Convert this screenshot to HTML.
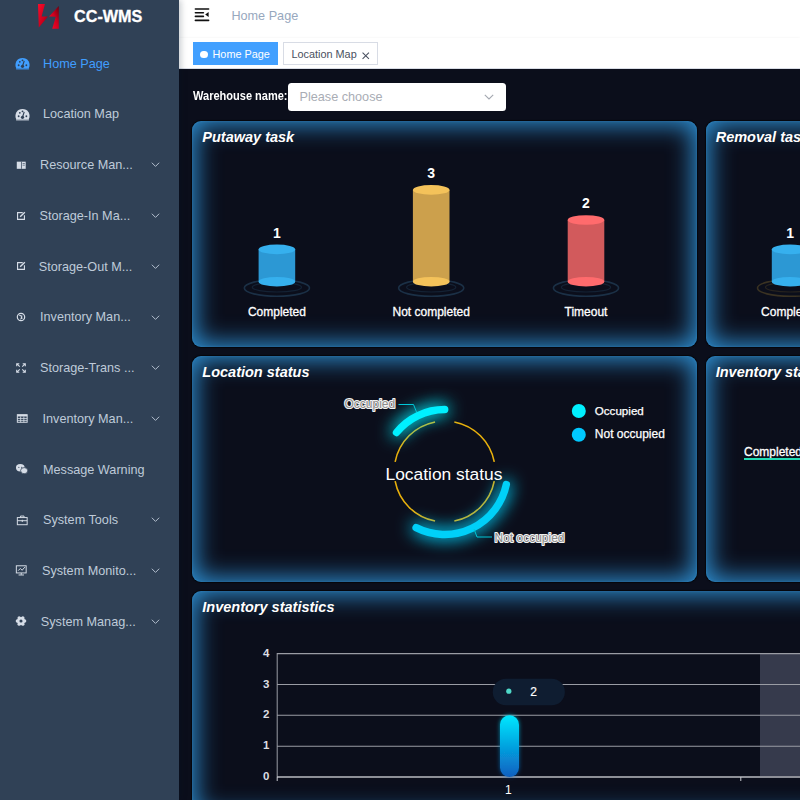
<!DOCTYPE html>
<html><head><meta charset="utf-8">
<style>
*{margin:0;padding:0;box-sizing:border-box}
html,body{width:800px;height:800px;overflow:hidden;background:#0b0e1b;font-family:"Liberation Sans",sans-serif}
.abs{position:absolute}
#side{position:absolute;left:0;top:0;width:179px;height:800px;background:#304156;z-index:5;box-shadow:2px 0 6px rgba(0,21,41,.22)}
.mi{position:absolute;left:0;width:179px;height:20px;color:#bfcbd9;font-size:12.67px;line-height:20px;white-space:nowrap}
.mi .t{position:absolute;top:0}
.mi .ic{position:absolute;left:15.5px;top:4.2px;width:12px;height:12px}
.mi .ic svg{display:block}
.mi .chev{position:absolute;left:150.8px;top:7.2px;width:9px;height:5.5px}
#hdr{position:absolute;left:179px;top:0;width:621px;height:38px;background:#fff;box-shadow:0 1px 3px rgba(0,21,41,.08)}
#tags{position:absolute;left:179px;top:38px;width:621px;height:31px;background:#fff;border-bottom:1px solid #d8dce5;box-shadow:0 1px 3px 0 rgba(0,0,0,.12)}
#main{position:absolute;left:179px;top:69px;width:621px;height:731px;background:#0b0e1b}
.card{position:absolute;border-radius:9px;background:#0b0e1b;box-shadow:inset 0 0 3px 0 rgba(70,170,235,.35),inset 0 0 25px 4px rgba(46,143,210,1),0 0 1px 1px rgba(0,0,0,.6)}
.ct{position:absolute;left:10px;top:8px;color:#fff;font-weight:bold;font-style:italic;font-size:14.5px;white-space:nowrap}
.lbl{position:absolute;color:#fff;font-size:12px;white-space:nowrap;transform:translateX(-50%);-webkit-text-stroke:.3px #fff}
.num{position:absolute;color:#fff;font-size:14px;font-weight:bold;transform:translateX(-50%)}
.olbl{color:#fff;font-size:12px;line-height:14px;white-space:nowrap;text-shadow:-1px -1px 0 #555,1px -1px 0 #555,-1px 1px 0 #555,1px 1px 0 #555}
</style></head><body>
<div id="side">
  <!-- logo -->
  <svg class="abs" style="left:0;top:0" width="179" height="34">
    <defs>
      <linearGradient id="lg1" x1="0" y1="0" x2="1" y2="1"><stop offset="0" stop-color="#ff0a2a"/><stop offset=".6" stop-color="#c8001c"/><stop offset="1" stop-color="#7a0010"/></linearGradient>
      <linearGradient id="lg2" x1="1" y1="0" x2="0" y2="1"><stop offset="0" stop-color="#6a0010"/><stop offset=".45" stop-color="#d0001e"/><stop offset="1" stop-color="#ff0a2a"/></linearGradient>
    </defs>
    <polygon points="38,4 45,4 41.6,16.4 48,16.6 38.8,27.6" fill="url(#lg1)"/>
    <polygon points="58.8,6 58.8,28.8 52.2,28.8 55.8,16.8 49,16.4" fill="url(#lg2)"/>
  </svg>
  <div class="abs" style="left:74px;top:5.6px;font-size:16.2px;font-weight:bold;color:#fff;line-height:20px;-webkit-text-stroke:.3px #fff">CC-WMS</div>
  <div class="mi" style="top:53.70px;color:#409eff"><span class="ic" style="left:14.95px;top:2.20px;width:15px;height:15px"><svg width="15" height="15" viewBox="0 0 14 14"><path d="M1.2,11.5 A6.6,6.6 0 1 1 12.8,11.5 Z" fill="#409eff"/><circle cx="7" cy="9.6" r="1.5" fill="#304156"/><path d="M7,9.6 L8.6,4.6" stroke="#304156" stroke-width="1.1"/><circle cx="3.4" cy="8.6" r=".85" fill="#304156"/><circle cx="4.5" cy="5.4" r=".85" fill="#304156"/><circle cx="7" cy="4" r=".85" fill="#304156"/><circle cx="10.6" cy="8.6" r=".85" fill="#304156"/><rect x="1" y="11.5" width="12" height="1" fill="#409eff"/></svg></span><span class="t" style="left:43px">Home Page</span></div>
<div class="mi" style="top:104.43px;color:#bfcbd9"><span class="ic" style="left:14.95px;top:2.20px;width:15px;height:15px"><svg width="15" height="15" viewBox="0 0 14 14"><path d="M1.2,11.5 A6.6,6.6 0 1 1 12.8,11.5 Z" fill="#d6dde7"/><circle cx="7" cy="9.6" r="1.5" fill="#304156"/><path d="M7,9.6 L8.6,4.6" stroke="#304156" stroke-width="1.1"/><circle cx="3.4" cy="8.6" r=".85" fill="#304156"/><circle cx="4.5" cy="5.4" r=".85" fill="#304156"/><circle cx="7" cy="4" r=".85" fill="#304156"/><circle cx="10.6" cy="8.6" r=".85" fill="#304156"/><rect x="1" y="11.5" width="12" height="1" fill="#d6dde7"/></svg></span><span class="t" style="left:43px">Location Map</span></div>
<div class="mi" style="top:155.16px;color:#bfcbd9"><span class="ic" style="left:14.75px;top:3.45px;width:12.5px;height:12.5px"><svg width="12.5" height="12.5" viewBox="0 0 14 14"><rect x="2" y="3" width="10" height="8" fill="#d6dde7"/><rect x="6.7" y="3" width="0.8" height="8" fill="#304156"/><rect x="8.5" y="4.5" width="2.5" height="0.7" fill="#304156"/><rect x="8.5" y="6.5" width="2.5" height="0.7" fill="#304156"/></svg></span><span class="t" style="left:40px">Resource Man...</span><svg class="chev" viewBox="0 0 9 6"><path d="M0.5,0.8 L4.5,4.8 L8.5,0.8" fill="none" stroke="#bfcbd9" stroke-width="1"/></svg></div>
<div class="mi" style="top:205.89px;color:#bfcbd9"><span class="ic" style="left:14.80px;top:3.70px;width:12px;height:12px"><svg width="12" height="12" viewBox="0 0 14 14"><path d="M9,3 H3 V11 H11 V6" fill="none" stroke="#d6dde7" stroke-width="1.3"/><path d="M6,8 L11.5,2.5" stroke="#d6dde7" stroke-width="1.6"/></svg></span><span class="t" style="left:39.5px">Storage-In Ma...</span><svg class="chev" viewBox="0 0 9 6"><path d="M0.5,0.8 L4.5,4.8 L8.5,0.8" fill="none" stroke="#bfcbd9" stroke-width="1"/></svg></div>
<div class="mi" style="top:256.62px;color:#bfcbd9"><span class="ic" style="left:14.80px;top:3.70px;width:12px;height:12px"><svg width="12" height="12" viewBox="0 0 14 14"><path d="M9,3 H3 V11 H11 V6" fill="none" stroke="#d6dde7" stroke-width="1.3"/><path d="M6,8 L11.5,2.5" stroke="#d6dde7" stroke-width="1.6"/></svg></span><span class="t" style="left:38.8px">Storage-Out M...</span><svg class="chev" viewBox="0 0 9 6"><path d="M0.5,0.8 L4.5,4.8 L8.5,0.8" fill="none" stroke="#bfcbd9" stroke-width="1"/></svg></div>
<div class="mi" style="top:307.35px;color:#bfcbd9"><span class="ic" style="left:14.90px;top:3.70px;width:12px;height:12px"><svg width="12" height="12" viewBox="0 0 14 14"><circle cx="7" cy="7" r="4.3" fill="none" stroke="#d6dde7" stroke-width="1.4"/><path d="M5,5 L8,6 L7,9 L9,8" stroke="#d6dde7" stroke-width="1.2" fill="none"/></svg></span><span class="t" style="left:40px">Inventory Man...</span><svg class="chev" viewBox="0 0 9 6"><path d="M0.5,0.8 L4.5,4.8 L8.5,0.8" fill="none" stroke="#bfcbd9" stroke-width="1"/></svg></div>
<div class="mi" style="top:358.08px;color:#bfcbd9"><span class="ic" style="left:15.00px;top:3.70px;width:12px;height:12px"><svg width="12" height="12" viewBox="0 0 14 14"><path d="M2,5 V2 H5 M9,2 H12 V5 M12,9 V12 H9 M5,12 H2 V9 M2,2 L5.5,5.5 M12,2 L8.5,5.5 M12,12 L8.5,8.5 M2,12 L5.5,8.5" fill="none" stroke="#d6dde7" stroke-width="1.3"/></svg></span><span class="t" style="left:40px">Storage-Trans ...</span><svg class="chev" viewBox="0 0 9 6"><path d="M0.5,0.8 L4.5,4.8 L8.5,0.8" fill="none" stroke="#bfcbd9" stroke-width="1"/></svg></div>
<div class="mi" style="top:408.81px;color:#bfcbd9"><span class="ic" style="left:15.50px;top:3.45px;width:12.5px;height:12.5px"><svg width="12.5" height="12.5" viewBox="0 0 14 14"><rect x="1.5" y="3" width="11" height="8.5" fill="none" stroke="#d6dde7" stroke-width="1.1"/><rect x="1.5" y="3" width="11" height="2" fill="#d6dde7"/><path d="M1.5,7.2 H12.5 M1.5,9.4 H12.5 M5.2,5 V11.5 M8.8,5 V11.5" stroke="#d6dde7" stroke-width=".9"/></svg></span><span class="t" style="left:42.5px">Inventory Man...</span><svg class="chev" viewBox="0 0 9 6"><path d="M0.5,0.8 L4.5,4.8 L8.5,0.8" fill="none" stroke="#bfcbd9" stroke-width="1"/></svg></div>
<div class="mi" style="top:459.54px;color:#bfcbd9"><span class="ic" style="left:15.35px;top:2.95px;width:13.5px;height:13.5px"><svg width="13.5" height="13.5" viewBox="0 0 14 14"><ellipse cx="5.5" cy="6" rx="4.5" ry="3.8" fill="#d6dde7"/><ellipse cx="9.5" cy="9" rx="3.7" ry="3.2" fill="#d6dde7" stroke="#304156" stroke-width=".8"/><circle cx="4" cy="5.5" r=".6" fill="#304156"/><circle cx="7" cy="5.5" r=".6" fill="#304156"/></svg></span><span class="t" style="left:43px">Message Warning</span></div>
<div class="mi" style="top:510.27px;color:#bfcbd9"><span class="ic" style="left:15.50px;top:3.45px;width:12.5px;height:12.5px"><svg width="12.5" height="12.5" viewBox="0 0 14 14"><rect x="1.5" y="4" width="11" height="8" fill="none" stroke="#d6dde7" stroke-width="1.1"/><path d="M5,4 V2.3 H9 V4 M1.5,7.5 H12.5 M7,6.5 V9" fill="none" stroke="#d6dde7" stroke-width="1.1"/></svg></span><span class="t" style="left:43px">System Tools</span><svg class="chev" viewBox="0 0 9 6"><path d="M0.5,0.8 L4.5,4.8 L8.5,0.8" fill="none" stroke="#bfcbd9" stroke-width="1"/></svg></div>
<div class="mi" style="top:561.00px;color:#bfcbd9"><span class="ic" style="left:15.00px;top:3.45px;width:12.5px;height:12.5px"><svg width="12.5" height="12.5" viewBox="0 0 14 14"><rect x="1.5" y="2" width="11" height="8" fill="none" stroke="#d6dde7" stroke-width="1.1"/><path d="M3.5,7.5 L6,5 L8,7 L11,3.5 M7,10 V12 M4,12.3 H10" fill="none" stroke="#d6dde7" stroke-width="1.1"/></svg></span><span class="t" style="left:42px">System Monito...</span><svg class="chev" viewBox="0 0 9 6"><path d="M0.5,0.8 L4.5,4.8 L8.5,0.8" fill="none" stroke="#bfcbd9" stroke-width="1"/></svg></div>
<div class="mi" style="top:611.73px;color:#bfcbd9"><span class="ic" style="left:15.00px;top:3.70px;width:12px;height:12px"><svg width="12" height="12" viewBox="0 0 14 14"><circle cx="7" cy="7" r="4.6" fill="#d6dde7"/><circle cx="11.30" cy="7.00" r="1.9" fill="#d6dde7"/><circle cx="9.15" cy="10.72" r="1.9" fill="#d6dde7"/><circle cx="4.85" cy="10.72" r="1.9" fill="#d6dde7"/><circle cx="2.70" cy="7.00" r="1.9" fill="#d6dde7"/><circle cx="4.85" cy="3.28" r="1.9" fill="#d6dde7"/><circle cx="9.15" cy="3.28" r="1.9" fill="#d6dde7"/><circle cx="7" cy="7" r="1.8" fill="#304156"/></svg></span><span class="t" style="left:40.8px">System Manag...</span><svg class="chev" viewBox="0 0 9 6"><path d="M0.5,0.8 L4.5,4.8 L8.5,0.8" fill="none" stroke="#bfcbd9" stroke-width="1"/></svg></div>
</div>
<div id="hdr">
  <svg class="abs" style="left:14.5px;top:7px" width="17" height="16" viewBox="0 0 17 16">
    <path d="M1.4,1.94 H14.6 M1.4,5.7 H9.4 M1.4,9.4 H9.4 M1.4,13.4 H14.6" stroke="#111" stroke-width="1.6" stroke-linecap="round"/>
    <polygon points="11.2,7.6 14.6,5.1 14.6,10" fill="#111"/>
  </svg>
  <div class="abs" style="left:52.4px;top:9px;font-size:12.67px;color:#97a8be;line-height:15px">Home Page</div>
</div>
<div id="tags">
  <div class="abs" style="left:13.5px;top:4px;width:85px;height:23px;background:#42a0ff;color:#fff;font-size:10.86px;line-height:23px">
    <span class="abs" style="left:7.8px;top:8.9px;width:7.4px;height:7.4px;border-radius:50%;background:#fff"></span>
    <span class="abs" style="left:20px;top:1.2px">Home Page</span>
  </div>
  <div class="abs" style="left:103.5px;top:4px;width:95px;height:23px;background:#fff;border:1px solid #d8dce5;color:#495060;font-size:10.86px;line-height:21px">
    <span class="abs" style="left:8px;top:1px">Location Map</span>
    <svg class="abs" style="left:78.5px;top:9.2px" width="7.5" height="7.5" viewBox="0 0 8 8"><path d="M0.6,0.6 L7.4,7.4 M7.4,0.6 L0.6,7.4" stroke="#495060" stroke-width="1.1"/></svg>
  </div>
</div>
<div id="main"></div>
<div class="abs" style="left:192.8px;top:89.2px;color:#fff;font-weight:bold;font-size:12.67px;line-height:14px;white-space:nowrap;transform:scaleX(0.871);transform-origin:0 0">Warehouse name:</div>
<div class="abs" style="left:288.3px;top:82.6px;width:217.4px;height:28.8px;background:#fff;border-radius:3.5px"></div>
<div class="abs" style="left:299.5px;top:90px;color:#a9adb5;font-size:12.67px;line-height:15px;white-space:nowrap">Please choose</div>
<svg class="abs" style="left:484px;top:94px" width="10" height="6" viewBox="0 0 10 6"><path d="M0.8,0.8 L5,5 L9.2,0.8" fill="none" stroke="#a4a8b0" stroke-width="1.1"/></svg>
<div class="card" style="left:192.3px;top:120.6px;width:504.7px;height:226.4px"><div class="ct">Putaway task</div></div>
<div class="card" style="left:705.7px;top:120.6px;width:504.7px;height:226.4px"><div class="ct">Removal task</div></div>
<div class="card" style="left:192.3px;top:356px;width:504.7px;height:226.4px"><div class="ct">Location status</div></div>
<div class="card" style="left:705.7px;top:356px;width:504.7px;height:226.4px"><div class="ct">Inventory status</div></div>
<div class="card" style="left:192.3px;top:591px;width:1018px;height:226.4px"><div class="ct">Inventory statistics</div></div>
<svg class="abs" style="left:0;top:0" width="800" height="800">
<ellipse cx="276.9" cy="288.0" rx="32.6" ry="8.3" fill="none" stroke="#1b3046" stroke-width="1.6"/>
<ellipse cx="276.9" cy="287.2" rx="24.6" ry="4.8" fill="none" stroke="#1b3046" stroke-width="1.2" opacity=".6"/>
<rect x="258.59999999999997" y="249.4" width="36.6" height="32.29999999999998" fill="#2c98d4"/>
<ellipse cx="276.9" cy="281.7" rx="18.3" ry="4.8" fill="#36b0ee"/>
<ellipse cx="276.9" cy="249.4" rx="18.3" ry="4.8" fill="#36b0ee"/>
<ellipse cx="431.2" cy="288.0" rx="32.6" ry="8.3" fill="none" stroke="#1b3046" stroke-width="1.6"/>
<ellipse cx="431.2" cy="287.2" rx="24.6" ry="4.8" fill="none" stroke="#1b3046" stroke-width="1.2" opacity=".6"/>
<rect x="412.9" y="189.9" width="36.6" height="91.79999999999998" fill="#cca04c"/>
<ellipse cx="431.2" cy="281.7" rx="18.3" ry="4.8" fill="#f4c25a"/>
<ellipse cx="431.2" cy="189.9" rx="18.3" ry="4.8" fill="#f4c25a"/>
<ellipse cx="586" cy="288.0" rx="32.6" ry="8.3" fill="none" stroke="#1b3046" stroke-width="1.6"/>
<ellipse cx="586" cy="287.2" rx="24.6" ry="4.8" fill="none" stroke="#1b3046" stroke-width="1.2" opacity=".6"/>
<rect x="567.7" y="220" width="36.6" height="61.69999999999999" fill="#d25a5c"/>
<ellipse cx="586" cy="281.7" rx="18.3" ry="4.8" fill="#ff6b6d"/>
<ellipse cx="586" cy="220" rx="18.3" ry="4.8" fill="#ff6b6d"/>
<ellipse cx="790.1" cy="288.0" rx="32.6" ry="8.3" fill="none" stroke="#3a3222" stroke-width="1.6"/>
<ellipse cx="790.1" cy="287.2" rx="24.6" ry="4.8" fill="none" stroke="#3a3222" stroke-width="1.2" opacity=".6"/>
<rect x="771.8000000000001" y="249.4" width="36.6" height="32.29999999999998" fill="#2c98d4"/>
<ellipse cx="790.1" cy="281.7" rx="18.3" ry="4.8" fill="#36b0ee"/>
<ellipse cx="790.1" cy="249.4" rx="18.3" ry="4.8" fill="#36b0ee"/>
</svg>
<div class="num" style="left:276.9px;top:226.3px;line-height:14px">1</div>
<div class="num" style="left:431.2px;top:166.3px;line-height:14px">3</div>
<div class="num" style="left:586px;top:196.3px;line-height:14px">2</div>
<div class="num" style="left:790.1px;top:226.3px;line-height:14px">1</div>
<div class="lbl" style="left:276.9px;top:304.8px;line-height:14px">Completed</div>
<div class="lbl" style="left:431.2px;top:304.8px;line-height:14px">Not completed</div>
<div class="lbl" style="left:586px;top:304.8px;line-height:14px">Timeout</div>
<div class="lbl" style="left:790.1px;top:304.8px;line-height:14px">Completed</div>
<svg class="abs" style="left:0;top:0" width="800" height="800">
<defs><filter id="glow" filterUnits="userSpaceOnUse" x="300" y="350" width="300" height="250"><feGaussianBlur stdDeviation="8.5" result="b"/><feComponentTransfer in="b" result="b2"><feFuncA type="linear" slope="1.6"/></feComponentTransfer><feMerge><feMergeNode in="b2"/><feMergeNode in="SourceGraphic"/></feMerge></filter></defs>
<path d="M494.27,461.86 A50.5,50.5 0 0 0 454.34,421.93" fill="none" stroke="#e8b00c" stroke-width="1.6"/>
<path d="M435.06,421.93 A50.5,50.5 0 0 0 395.13,461.86" fill="none" stroke="#e8b00c" stroke-width="1.6"/>
<path d="M395.13,481.14 A50.5,50.5 0 0 0 435.06,521.07" fill="none" stroke="#e8b00c" stroke-width="1.6"/>
<path d="M454.34,521.07 A50.5,50.5 0 0 0 494.27,481.14" fill="none" stroke="#e8b00c" stroke-width="1.6"/>
<path d="M444.70,409.50 A62,62 0 0 0 396.52,432.48" fill="none" stroke="#00f0ff" stroke-width="7.4" stroke-linecap="round" stroke-linejoin="round" filter="url(#glow)"/>
<path d="M506.32,484.60 A63,63 0 0 1 416.10,527.63" fill="none" stroke="#00d0f8" stroke-width="7.4" stroke-linecap="round" filter="url(#glow)"/>
<path d="M398.5,404.5 H413.5 L416.5,412" fill="none" stroke="#00c8d8" stroke-width="1"/>
<path d="M474,529 L477,537 H492" fill="none" stroke="#00c8d8" stroke-width="1"/>
<circle cx="578.8" cy="411" r="7" fill="#00f0ff"/>
<circle cx="578.8" cy="434.8" r="7" fill="#00c8ff"/>
</svg>
<div class="abs" style="left:385.5px;top:464px;color:#fff;font-size:17.4px;line-height:20px;white-space:nowrap">Location status</div>
<svg class="abs" style="left:0;top:0" width="800" height="800"><g font-family="Liberation Sans" font-size="12" fill="#8c8c8c" stroke="#f2f2f2" stroke-width="2.2" paint-order="stroke" stroke-linejoin="round"><text x="344.5" y="408.2">Occupied</text><text x="494.5" y="541.6">Not occupied</text></g></svg>
<div class="abs" style="left:594.8px;top:403.7px;color:#fff;font-size:11.6px;line-height:14px;white-space:nowrap;-webkit-text-stroke:.25px #fff">Occupied</div>
<div class="abs" style="left:594.8px;top:427.4px;color:#fff;font-size:12px;line-height:14px;white-space:nowrap;-webkit-text-stroke:.25px #fff">Not occupied</div>
<div class="abs" style="left:744px;top:444.5px;color:#fff;font-size:12px;line-height:14px;white-space:nowrap;-webkit-text-stroke:.3px #fff">Completed</div>
<div class="abs" style="left:743.5px;top:458px;width:60px;height:1.8px;background:#22dcb4"></div>
<svg class="abs" style="left:0;top:0" width="800" height="800">
<defs><filter id="barglow" filterUnits="userSpaceOnUse" x="480" y="690" width="60" height="110"><feGaussianBlur stdDeviation="2" result="b"/><feComponentTransfer in="b" result="b2"><feFuncA type="linear" slope=".7"/></feComponentTransfer><feMerge><feMergeNode in="b2"/><feMergeNode in="SourceGraphic"/></feMerge></filter><linearGradient id="bg1" x1="0" y1="0" x2="0" y2="1"><stop offset="0" stop-color="#00e8ff"/><stop offset="1" stop-color="#0a5fc0"/></linearGradient></defs>
<rect x="760" y="653.2" width="60" height="122.8" fill="#363a4c"/>
<line x1="277" y1="653.6" x2="800" y2="653.6" stroke="#9a9ca4" stroke-width="1.1"/>
<line x1="277" y1="684.5" x2="800" y2="684.5" stroke="#9a9ca4" stroke-width="1.1"/>
<line x1="277" y1="715.3" x2="800" y2="715.3" stroke="#9a9ca4" stroke-width="1.1"/>
<line x1="277" y1="746.2" x2="800" y2="746.2" stroke="#9a9ca4" stroke-width="1.1"/>
<line x1="277" y1="777.0" x2="800" y2="777.0" stroke="#9a9ca4" stroke-width="1.1"/>
<line x1="277.2" y1="653" x2="277.2" y2="777" stroke="#9a9da6" stroke-width="1"/>
<line x1="277" y1="777" x2="800" y2="777" stroke="#c8cad0" stroke-width="1"/>
<line x1="740.8" y1="777" x2="740.8" y2="781" stroke="#c8cad0" stroke-width="1"/>
<line x1="277.2" y1="777" x2="277.2" y2="781" stroke="#c8cad0" stroke-width="1"/>
<rect x="500" y="715.2" width="19" height="61.8" rx="9.5" fill="url(#bg1)" filter="url(#barglow)"/>
<rect x="492.8" y="678.8" width="72" height="26.4" rx="13" fill="#0f1d31"/>
<circle cx="508.8" cy="691.2" r="2.6" fill="#4fd8c8"/>
</svg>
<div class="abs" style="left:530.3px;top:684.5px;color:#fff;font-size:12px;line-height:14px;-webkit-text-stroke:.2px #fff">2</div>
<div class="abs" style="left:263px;top:646.6px;color:#dcdde2;font-size:11.5px;font-weight:bold;line-height:13px">4</div>
<div class="abs" style="left:263px;top:677.5px;color:#dcdde2;font-size:11.5px;font-weight:bold;line-height:13px">3</div>
<div class="abs" style="left:263px;top:708.3px;color:#dcdde2;font-size:11.5px;font-weight:bold;line-height:13px">2</div>
<div class="abs" style="left:263px;top:739.2px;color:#dcdde2;font-size:11.5px;font-weight:bold;line-height:13px">1</div>
<div class="abs" style="left:263px;top:770.0px;color:#dcdde2;font-size:11.5px;font-weight:bold;line-height:13px">0</div>
<div class="abs" style="left:505px;top:783px;color:#fff;font-size:12px;line-height:14px">1</div>
</body></html>
